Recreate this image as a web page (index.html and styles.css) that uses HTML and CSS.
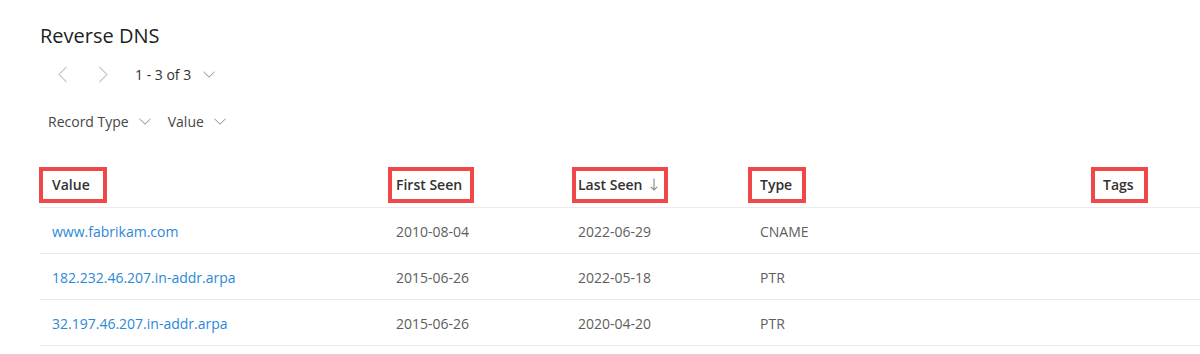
FILE: index.html
```html
<!DOCTYPE html>
<html lang="en">
<head>
    <meta charset="UTF-8">
    <meta name="viewport" content="width=device-width, initial-scale=1.0">
    <title>Reverse DNS</title>
    <link rel="stylesheet" href="styles.css">
</head>
<body>
    <div class="panel">
        <h2 class="title">Reverse DNS</h2>

        <div class="pager">
            <button class="nav-btn" disabled>
                <svg width="11" height="17" viewBox="0 0 11 17"><path d="M9.5 1 L2 8.5 L9.5 16" fill="none" stroke="currentColor" stroke-width="1.1"/></svg>
            </button>
            <button class="nav-btn" disabled>
                <svg width="11" height="17" viewBox="0 0 11 17"><path d="M1.5 1 L9 8.5 L1.5 16" fill="none" stroke="currentColor" stroke-width="1.1"/></svg>
            </button>
            <button class="drop">1 - 3 of 3
                <svg class="chev" width="12" height="7" viewBox="0 0 12 7"><path d="M0.5 0.8 L6 6.2 L11.5 0.8" fill="none" stroke="currentColor" stroke-width="1"/></svg>
            </button>
        </div>

        <div class="filters">
            <button class="drop filter">Record Type
                <svg class="chev" width="12" height="7" viewBox="0 0 12 7"><path d="M0.5 0.8 L6 6.2 L11.5 0.8" fill="none" stroke="currentColor" stroke-width="1"/></svg>
            </button>
            <button class="drop filter">Value
                <svg class="chev" width="12" height="7" viewBox="0 0 12 7"><path d="M0.5 0.8 L6 6.2 L11.5 0.8" fill="none" stroke="currentColor" stroke-width="1"/></svg>
            </button>
        </div>

        <table class="grid">
            <colgroup>
                <col class="c-value">
                <col class="c-date">
                <col class="c-date">
                <col class="c-type">
                <col>
            </colgroup>
            <thead>
                <tr>
                    <th><span class="mark mark-value">Value</span></th>
                    <th><span class="mark">First Seen</span></th>
                    <th><span class="mark mark-last">Last Seen
                        <svg class="sort" width="8" height="13" viewBox="0 0 8 13"><path d="M4 0.5 V12 M0.8 8.8 L4 12 L7.2 8.8" fill="none" stroke="currentColor" stroke-width="1.1"/></svg>
                    </span></th>
                    <th><span class="mark mark-wide">Type</span></th>
                    <th><span class="mark mark-wide">Tags</span></th>
                </tr>
            </thead>
            <tbody>
                <tr>
                    <td><a href="#">www.fabrikam.com</a></td>
                    <td>2010-08-04</td>
                    <td>2022-06-29</td>
                    <td>CNAME</td>
                    <td></td>
                </tr>
                <tr>
                    <td><a href="#">182.232.46.207.in-addr.arpa</a></td>
                    <td>2015-06-26</td>
                    <td>2022-05-18</td>
                    <td>PTR</td>
                    <td></td>
                </tr>
                <tr>
                    <td><a href="#">32.197.46.207.in-addr.arpa</a></td>
                    <td>2015-06-26</td>
                    <td>2020-04-20</td>
                    <td>PTR</td>
                    <td></td>
                </tr>
            </tbody>
        </table>
    </div>
</body>
</html>
```

FILE: styles.css
```css
body {
    margin: 0;
    background-color: #ffffff;
    font-family: "Open Sans", "Noto Sans", Arial, sans-serif;
    color: #323130;
}

.panel {
    padding: 22px 0 0 40px;
}

.title {
    margin: 0;
    font-size: 20px;
    font-weight: 400;
    line-height: 28px;
    color: #201f1e;
}

button {
    font-family: inherit;
    background: none;
    border: none;
    padding: 0;
    cursor: pointer;
}

.pager {
    display: flex;
    align-items: center;
    height: 32px;
    margin-top: 8px;
    padding-left: 17px;
}

.nav-btn {
    color: #c8c6c4;
    width: 41px;
    height: 32px;
    display: flex;
    align-items: center;
}

.drop {
    display: flex;
    align-items: center;
    gap: 10px;
    font-size: 14px;
    color: #323130;
}

.chev {
    color: #8a8886;
}

.pager .drop {
    margin-left: -4px;
    gap: 12px;
}

.filters {
    display: flex;
    align-items: center;
    gap: 17px;
    height: 32px;
    margin-top: 15px;
    padding-left: 8px;
}

.filter {
    color: #484644;
}

.grid {
    width: calc(100% + 1px);
    margin-top: 24px;
    border-collapse: collapse;
    font-size: 14px;
}

.c-value { width: 344px; }
.c-date { width: 182px; }
.c-type { width: 343px; }

.grid th,
.grid td {
    height: 45px;
    padding: 0 0 0 12px;
    text-align: left;
    border-bottom: 1px solid #edebe9;
    white-space: nowrap;
}

.grid th {
    font-weight: 600;
    color: #323130;
    padding-top: 1px;
}

.grid td {
    height: 43px;
    color: #605e5c;
    padding-top: 2px;
}

.grid a {
    color: #2b88d8;
    text-decoration: none;
}

.mark {
    display: inline-flex;
    align-items: center;
    border: 4px solid #f04848;
    padding: 4px 8px 4px 4px;
    margin-left: -8px;
    line-height: 20px;
}

.mark-value {
    padding: 4px 13px 4px 9px;
    margin-left: -13px;
}

.mark-last {
    padding: 4px 6px 4px 2px;
    margin-left: -6px;
}

.mark-wide {
    padding: 4px 10px 4px 8px;
    margin-left: -12px;
}

.sort {
    color: #8a8886;
    margin-left: 8px;
}
```
